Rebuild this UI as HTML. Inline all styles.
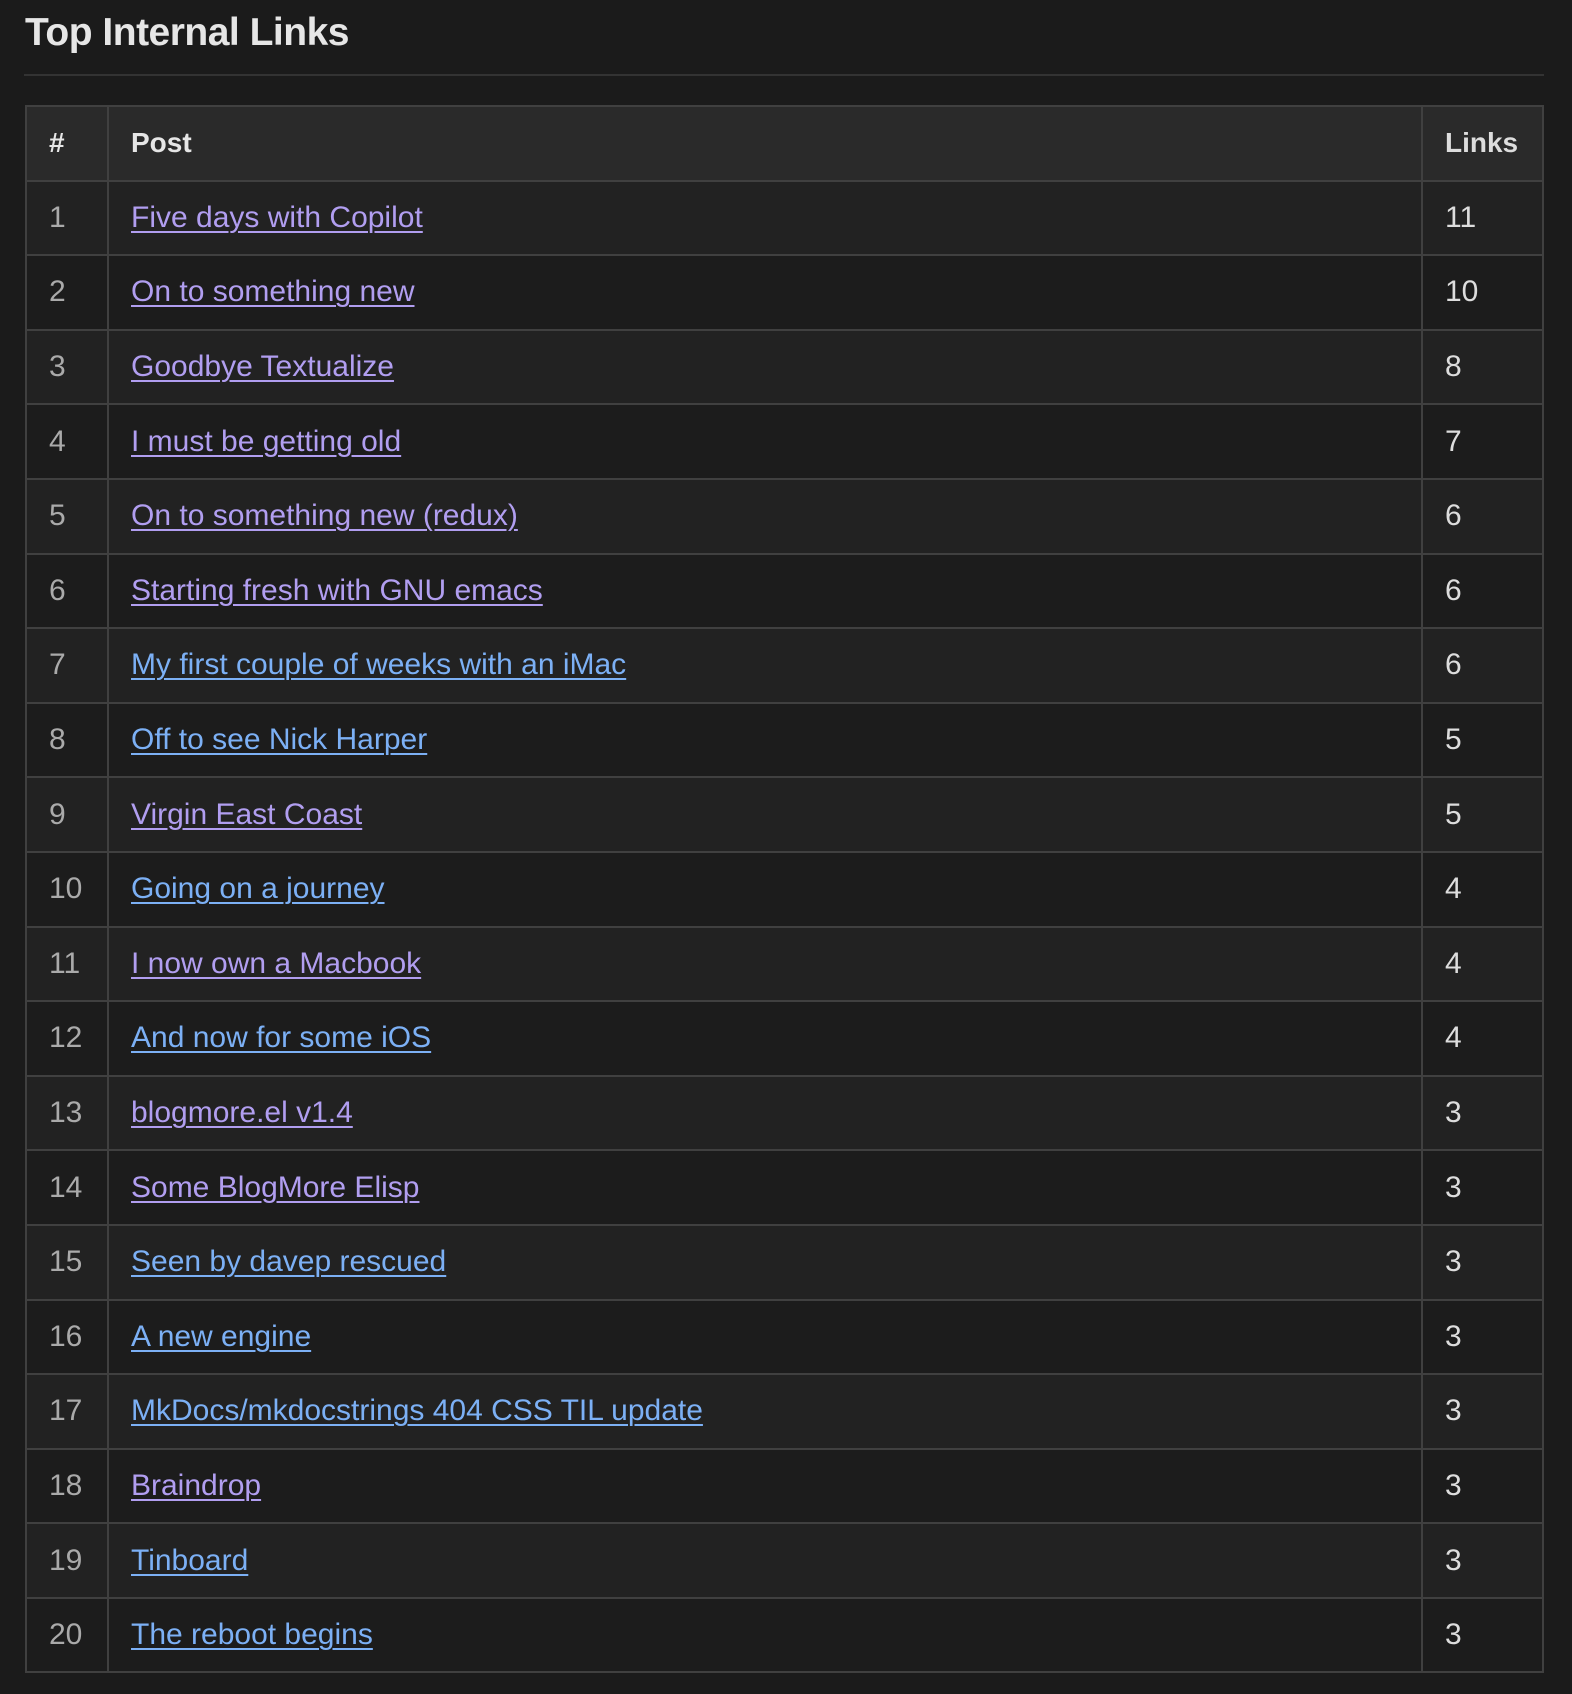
<!DOCTYPE html>
<html><head><style>
html,body{margin:0;background:#1b1b1b;width:1572px;height:1694px;overflow:hidden}
body{font-family:"Liberation Sans",sans-serif;color:#ddd}
h2{position:absolute;left:25px;top:11px;margin:0;font-size:39px;font-weight:bold;color:#e6e6e6;letter-spacing:-0.5px}
.hr{position:absolute;left:24px;top:74px;width:1520px;height:2px;background:#333}
table{position:absolute;left:25px;top:105px;width:1519px;border-collapse:collapse;font-size:30px}
td,th{border:2px solid #404040;height:72.6px;padding:0 0 0 22px;text-align:left}
th{background:#2a2a2a;color:#e6e6e6;font-weight:bold;font-size:28px}
tr:nth-child(odd) td{background:#222}
tr:nth-child(even) td{background:#1c1c1c}
td:first-child{color:#aaa;width:58px}
td:last-child,th:last-child{width:97px;color:#ddd}
a{text-decoration:underline;text-underline-offset:4px;text-decoration-thickness:2px}
.p{color:#b19ef0}.b{color:#7cb0f5}
</style></head><body>
<h2>Top Internal Links</h2><div class="hr"></div>
<table>
<thead><tr><th>#</th><th>Post</th><th>Links</th></tr></thead>
<tbody>
<tr><td>1</td><td><a class="p">Five days with Copilot</a></td><td>11</td></tr>
<tr><td>2</td><td><a class="p">On to something new</a></td><td>10</td></tr>
<tr><td>3</td><td><a class="p">Goodbye Textualize</a></td><td>8</td></tr>
<tr><td>4</td><td><a class="p">I must be getting old</a></td><td>7</td></tr>
<tr><td>5</td><td><a class="p">On to something new (redux)</a></td><td>6</td></tr>
<tr><td>6</td><td><a class="p">Starting fresh with GNU emacs</a></td><td>6</td></tr>
<tr><td>7</td><td><a class="b">My first couple of weeks with an iMac</a></td><td>6</td></tr>
<tr><td>8</td><td><a class="b">Off to see Nick Harper</a></td><td>5</td></tr>
<tr><td>9</td><td><a class="p">Virgin East Coast</a></td><td>5</td></tr>
<tr><td>10</td><td><a class="b">Going on a journey</a></td><td>4</td></tr>
<tr><td>11</td><td><a class="p">I now own a Macbook</a></td><td>4</td></tr>
<tr><td>12</td><td><a class="b">And now for some iOS</a></td><td>4</td></tr>
<tr><td>13</td><td><a class="p">blogmore.el v1.4</a></td><td>3</td></tr>
<tr><td>14</td><td><a class="p">Some BlogMore Elisp</a></td><td>3</td></tr>
<tr><td>15</td><td><a class="b">Seen by davep rescued</a></td><td>3</td></tr>
<tr><td>16</td><td><a class="b">A new engine</a></td><td>3</td></tr>
<tr><td>17</td><td><a class="b">MkDocs/mkdocstrings 404 CSS TIL update</a></td><td>3</td></tr>
<tr><td>18</td><td><a class="p">Braindrop</a></td><td>3</td></tr>
<tr><td>19</td><td><a class="b">Tinboard</a></td><td>3</td></tr>
<tr><td>20</td><td><a class="b">The reboot begins</a></td><td>3</td></tr>
</tbody></table>
</body></html>
